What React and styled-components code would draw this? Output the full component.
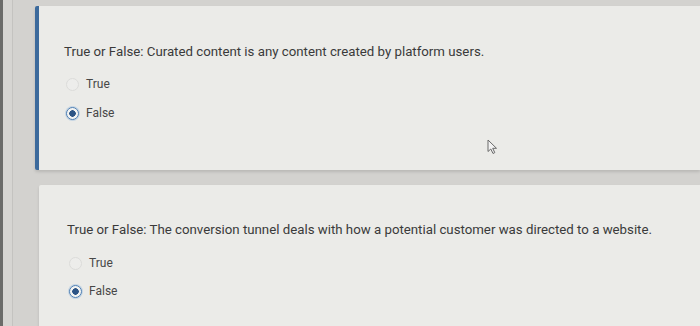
import styled, { createGlobalStyle } from "styled-components";

const Global = createGlobalStyle`
html, body {
    margin: 0;
    padding: 0;
    background: #d3d2cf;
    font-family: Roboto, "Liberation Sans", sans-serif;
}
`

const questions = [
    { text: "True or False: Curated content is any content created by platform users.", answer: "False", active: true },
    { text: "True or False: The conversion tunnel deals with how a potential customer was directed to a website.", answer: "False" },
]

const Cursor = () => (
    <svg width="12" height="16" viewBox="0 0 12 16">
        <path d="M1 1 L1 12.5 L3.8 10 L6 14.5 L7.8 13.6 L5.7 9.3 L9.5 9.3 Z" fill="#f2f2f2" stroke="#6a6a6a" strokeWidth="1" strokeLinejoin="round" />
    </svg>
)

const Radio = ({ label, checked }) => (
    <Option>
        <Circle $checked={checked} />
        <span>{label}</span>
    </Option>
)

const App = () => {
    return (
        <Page>
            <Global />
            <Column>
                {questions.map((q, i) => (
                    <Card key={i} $active={q.active}>
                        <Question>{q.text}</Question>
                        <Options $active={q.active}>
                            <Radio label="True" checked={q.answer === "True"} />
                            <Radio label="False" checked={q.answer === "False"} />
                        </Options>
                        {q.active && <Pointer><Cursor /></Pointer>}
                    </Card>
                ))}
            </Column>
        </Page>
    )
}

const Page = styled.div`
height: 326px;
overflow: hidden;
border-left: 3px solid #6b6b69;
background: linear-gradient(90deg, #d6d5d2 0, #d6d5d2 9px, #c4c3c0 9px, #c4c3c0 10px, #d3d2cf 10px);
padding-top: 6px;
box-sizing: border-box;
`
const Column = styled.div`
display: flex;
flex-direction: column;
gap: 15px;
`
const Card = styled.div`
position: relative;
height: ${p => p.$active ? "164px" : "160px"};
margin-left: ${p => p.$active ? "32px" : "36px"};
background: #ebebe8;
border-left: 4px solid ${p => p.$active ? "#3c6a9c" : "transparent"};
border-left-width: ${p => p.$active ? "4px" : "0"};
border-radius: 2px 0 0 2px;
padding: ${p => p.$active ? "38px" : "37px"} 0 0 ${p => p.$active ? "25px" : "28px"};
box-sizing: border-box;
box-shadow: 0 2px 3px rgba(0, 0, 0, 0.12);
`
const Question = styled.div`
font-size: 13.25px;
color: #3a3a3a;
line-height: 16px;
`
const Options = styled.div`
display: flex;
flex-direction: column;
gap: ${p => p.$active ? "13px" : "12px"};
margin-top: ${p => p.$active ? "16px" : "17px"};
padding-left: 2px;
`
const Option = styled.div`
display: flex;
align-items: center;
gap: 7px;
font-size: 12px;
color: #474747;
height: 16px;
`
const Circle = styled.span`
width: 13px;
height: 13px;
border-radius: 50%;
box-sizing: border-box;
border: 1.5px solid ${p => p.$checked ? "#4c7eb4" : "#dcdcda"};
background: ${p => p.$checked ? "radial-gradient(circle, #2c5485 0, #2c5485 3px, #f3f3f1 3.5px)" : "#ededeb"};
box-shadow: ${p => p.$checked ? "0 0 0 1px rgba(140, 180, 220, 0.4)" : "none"};
`
const Pointer = styled.div`
position: absolute;
left: 448px;
top: 133px;
`

export default App
